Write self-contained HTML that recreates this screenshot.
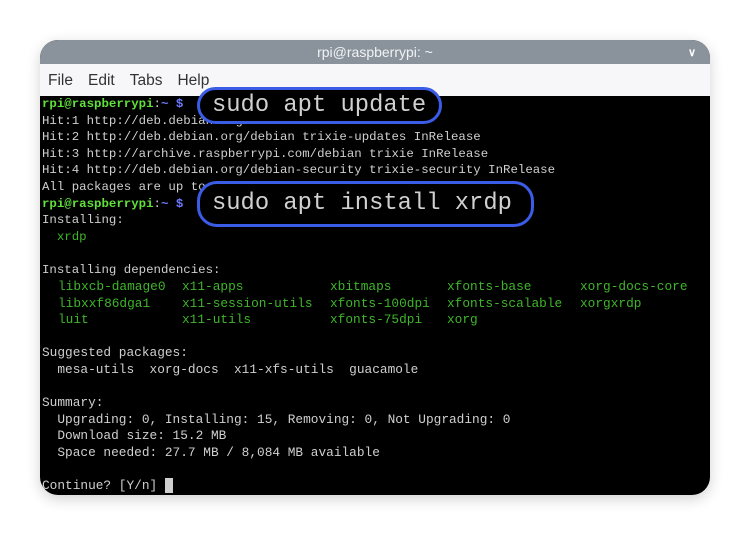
<!DOCTYPE html>
<html><head><style>
body{margin:0;width:750px;height:535px;background:#fff;position:relative;overflow:hidden;font-family:"Liberation Sans",sans-serif}
.win{position:absolute;left:40px;top:40px;width:670px;height:455px;border-radius:18px;overflow:hidden;box-shadow:0 4px 14px rgba(0,0,0,.18);background:#000}
.title{height:24px;background:#8a939c;color:#f1f3f5;font-size:14px;text-align:center;line-height:24px}
.chev{position:absolute;right:14px;top:1px;color:#fff;font-size:11px;font-weight:bold}
.menu{height:32px;background:#f7f7f9;font-size:15.5px;color:#333;line-height:34px;padding-left:8px}
.menu span{margin-right:15px}
pre{margin:0;position:absolute;left:2px;font-family:"Liberation Mono",monospace;font-size:12.4px;line-height:16.6px;color:#cfcfcf}
.p{color:#5fe03a;font-weight:bold}.b{color:#6b7bff;font-weight:bold}.g{color:#3fb52a}
.c{position:absolute;font-family:"Liberation Mono",monospace;font-size:12.8px;color:#3fb52a;white-space:pre;line-height:16.6px}
.ov{position:absolute;border:3px solid #3a5ce6;border-radius:20px;background:#000;color:#d0d0d0;font-family:"Liberation Mono",monospace;font-size:23.8px;box-sizing:border-box;padding-left:12px}
.cur{background:#cfcfcf;color:#cfcfcf}
</style></head><body>
<div class="win">
<div class="title">rpi@raspberrypi: ~<span class="chev">&#x2228;</span></div>
<div class="menu"><span>File</span><span>Edit</span><span>Tabs</span><span>Help</span></div>
<pre style="top:56px"><span class="p">rpi@raspberrypi</span>:<span class="b">~ $</span>
Hit:1 http://deb.debian.org/debian trixie InRelease
Hit:2 http://deb.debian.org/debian trixie-updates InRelease
Hit:3 http://archive.raspberrypi.com/debian trixie InRelease
Hit:4 http://deb.debian.org/debian-security trixie-security InRelease
All packages are up to date.
<span class="p">rpi@raspberrypi</span>:<span class="b">~ $</span>
Installing:
  <span class="g">xrdp</span>

Installing dependencies:</pre>
<pre style="top:305.4px;font-size:12.8px">Suggested packages:
  mesa-utils  xorg-docs  x11-xfs-utils  guacamole
 
Summary:
  Upgrading: 0, Installing: 15, Removing: 0, Not Upgrading: 0
  Download size: 15.2 MB
  Space needed: 27.7 MB / 8,084 MB available
 
Continue? [Y/n] <span class="cur">_</span></pre>
<div class="c" style="left:18px;top:239px">libxcb-damage0
libxxf86dga1
luit</div>
<div class="c" style="left:142px;top:239px">x11-apps
x11-session-utils
x11-utils</div>
<div class="c" style="left:290px;top:239px">xbitmaps
xfonts-100dpi
xfonts-75dpi</div>
<div class="c" style="left:407px;top:239px">xfonts-base
xfonts-scalable
xorg</div>
<div class="c" style="left:540px;top:239px">xorg-docs-core
xorgxrdp</div>
</div>
<div class="ov" style="left:197px;top:87px;width:245px;height:37px;line-height:31px">sudo apt update</div>
<div class="ov" style="left:197px;top:181px;width:337px;height:46px;line-height:40px">sudo apt install xrdp</div>
</body></html>
